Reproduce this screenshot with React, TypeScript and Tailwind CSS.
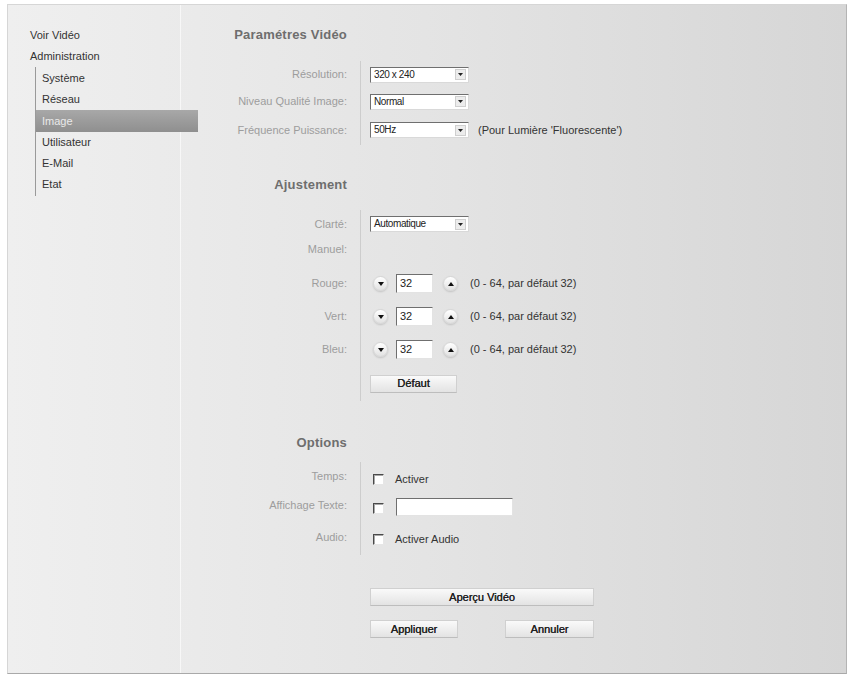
import React from "react";

const font = { fontFamily: '"Liberation Sans", Arial, sans-serif' };

function Caret({ up = false }: { up?: boolean }) {
  return (
    <svg width="6" height="4" viewBox="0 0 6 4" className="block">
      <path d={up ? "M0 4 L3 0 L6 4 Z" : "M0 0 L6 0 L3 4 Z"} fill="#111" />
    </svg>
  );
}

function Select({ value }: { value: string }) {
  return (
    <div className="flex h-[16px] w-[99px] items-center justify-between border border-t-[#6f6f6f] border-l-[#6f6f6f] border-r-[#d9d9d9] border-b-[#d9d9d9] bg-white pl-[3px] pr-[2px]">
      <span className="text-[10px] leading-none tracking-[-0.4px] text-[#222]">{value}</span>
      <span className="flex h-[11px] w-[11px] items-center justify-center border border-[#cfcfcf] bg-[#ececec]">
        <svg width="5" height="3" viewBox="0 0 5 3" className="block">
          <path d="M0 0 L5 0 L2.5 3 Z" fill="#222" />
        </svg>
      </span>
    </div>
  );
}

function RoundBtn({ up = false }: { up?: boolean }) {
  return (
    <span className="flex h-[15px] w-[15px] items-center justify-center rounded-full border border-[#d6d6d6] bg-gradient-to-b from-[#ffffff] to-[#e2e2e2] shadow-[0_1px_2px_rgba(0,0,0,0.15)]">
      <Caret up={up} />
    </span>
  );
}

function Box() {
  return (
    <span className="block h-[11px] w-[11px] border border-t-[#4a4a4a] border-l-[#4a4a4a] border-r-[#e6e6e6] border-b-[#e6e6e6] bg-white shadow-[inset_1px_1px_0_#a8a8a8]" />
  );
}

function Btn({ label, w }: { label: string; w: string }) {
  return (
    <div
      className={`flex h-[18px] ${w} items-center justify-center border border-[#d0d0d0] border-b-[#bdbdbd] bg-gradient-to-b from-[#fafafa] to-[#e3e3e3] text-[11px] text-[#222] [text-shadow:0.3px_0_0_#222]`}
    >
      {label}
    </div>
  );
}

function Row({
  label,
  h,
  children,
  labelTop = false,
}: {
  label?: string;
  h: string;
  children?: React.ReactNode;
  labelTop?: boolean;
}) {
  return (
    <div className={`flex ${h}`}>
      <div
        className={`flex w-[179px] justify-end pr-[13px] text-[11px] text-[#9d9d9d] ${labelTop ? "items-start pt-[3px]" : "items-center"}`}
      >
        {label}
      </div>
      <div className="flex items-center border-l border-[#cdcdcd] pl-[9px]">{children}</div>
    </div>
  );
}

function Heading({ text, mt }: { text: string; mt: string }) {
  return (
    <div className={`${mt} w-[166px] text-right text-[13px] font-bold leading-[16px] tracking-[0.2px] text-[#6e6e6e]`}>
      {text}
    </div>
  );
}

function Spin() {
  return (
    <div className="flex items-center">
      <span className="ml-[3px]">
        <RoundBtn />
      </span>
      <span className="ml-[8px] flex h-[19px] w-[37px] items-center border border-t-[#6f6f6f] border-l-[#6f6f6f] border-r-[#e3e3e3] border-b-[#e3e3e3] bg-white pl-[3px] text-[11px] text-[#222]">
        32
      </span>
      <span className="ml-[10px]">
        <RoundBtn up />
      </span>
      <span className="ml-[12px] text-[11px] text-[#333]">(0 - 64, par défaut 32)</span>
    </div>
  );
}

const subItems = ["Système", "Réseau", "Image", "Utilisateur", "E-Mail", "Etat"];

export default function App() {
  return (
    <div className="h-[676px] w-[851px] bg-white pl-[7px] pt-[4px]" style={font}>
      <div className="flex h-[670px] w-[840px] border border-[#d6d6d6] border-b-[#a9a9a9] border-r-[#b4b4b4] bg-gradient-to-r from-[#efefef] via-[#e4e4e4] to-[#d6d6d6]">
        {/* navigation */}
        <div className="relative w-[173px] shrink-0 border-r border-[#f7f7f7] pl-[22px] pt-[20px] text-[11px] text-[#333]">
          <div className="leading-[21px]">Voir Vidéo</div>
          <div className="leading-[21px]">Administration</div>
          <div className="ml-[5px] border-l border-[#9a9a9a] py-[1px]">
            {subItems.map((s) =>
              s === "Image" ? (
                <div
                  key={s}
                  className="relative z-10 h-[22px] w-[162px] bg-gradient-to-b from-[#a8a8a8] to-[#8f8f8f] pl-[6px] leading-[22px] text-[#e9e9e9]"
                >
                  {s}
                </div>
              ) : (
                <div key={s} className="h-[21px] pl-[6px] leading-[21px]">
                  {s}
                </div>
              )
            )}
          </div>
        </div>

        {/* settings */}
        <div className="flex-1 pt-[22px]">
          <Heading text="Paramétres Vidéo" mt="mt-0" />
          <div className="mt-[18px]">
            <Row label="Résolution:" h="h-[27px]">
              <Select value="320 x 240" />
            </Row>
            <Row label="Niveau Qualité Image:" h="h-[27px]">
              <Select value="Normal" />
            </Row>
            <Row label="Fréquence Puissance:" h="h-[30px]">
              <Select value="50Hz" />
              <span className="ml-[9px] text-[11px] text-[#333]">(Pour Lumière 'Fluorescente')</span>
            </Row>
          </div>

          <Heading text="Ajustement" mt="mt-[32px]" />
          <div className="mt-[17px]">
            <Row label="Clarté:" h="h-[28px]">
              <Select value="Automatique" />
            </Row>
            <Row label="Manuel:" h="h-[29px]" labelTop />
            <Row label="Rouge:" h="h-[33px]">
              <Spin />
            </Row>
            <Row label="Vert:" h="h-[33px]">
              <Spin />
            </Row>
            <Row label="Bleu:" h="h-[33px]">
              <Spin />
            </Row>
            <Row h="h-[35px]">
              <Btn label="Défaut" w="w-[87px]" />
            </Row>
          </div>

          <Heading text="Options" mt="mt-[34px]" />
          <div className="mt-[11px]">
            <Row label="Temps:" h="h-[29px]">
              <div className="flex items-center pt-[5px]">
                <span className="ml-[3px]">
                  <Box />
                </span>
                <span className="ml-[11px] text-[11px] text-[#333]">Activer</span>
              </div>
            </Row>
            <Row label="Affichage Texte:" h="h-[28px]">
              <div className="flex items-center pt-[3px]">
                <span className="ml-[3px] mt-[4px]">
                  <Box />
                </span>
                <span className="ml-[12px] block h-[18px] w-[117px] border border-t-[#6f6f6f] border-l-[#6f6f6f] border-r-[#e3e3e3] border-b-[#e3e3e3] bg-white" />
              </div>
            </Row>
            <Row label="Audio:" h="h-[36px]">
              <div className="flex items-center pt-[4px]">
                <span className="ml-[3px]">
                  <Box />
                </span>
                <span className="ml-[11px] text-[11px] text-[#333]">Activer Audio</span>
              </div>
            </Row>
          </div>

          <div className="ml-[189px] mt-[33px] w-[224px]">
            <Btn label="Aperçu Vidéo" w="w-[224px]" />
            <div className="mt-[14px] flex justify-between">
              <Btn label="Appliquer" w="w-[88px]" />
              <Btn label="Annuler" w="w-[89px]" />
            </div>
          </div>
        </div>
      </div>
    </div>
  );
}
